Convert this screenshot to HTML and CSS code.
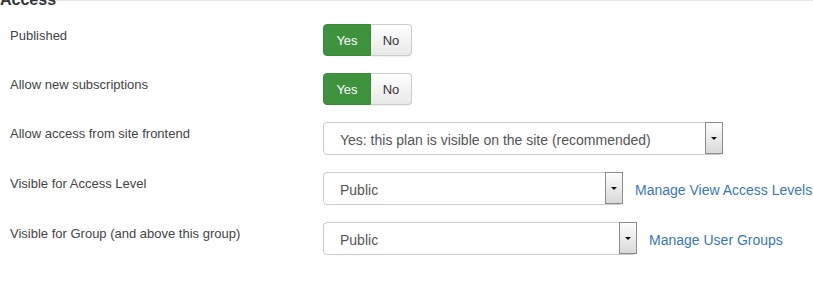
FILE: index.html
```html
<!DOCTYPE html>
<html><head><meta charset="utf-8"><title>Access</title>
<link rel="stylesheet" href="styles.css">
</head><body>
<div class="legend">
   <span class="legend-text">Access</span>
   <span class="legend-rule"></span>
</div>
<div class="form">
   <div class="row">
      <div class="label">Published</div>
      <div class="controls">
         <div class="toggle"><span class="btn yes">Yes</span><span class="btn no">No</span></div>
      </div>
   </div>
   <div class="row">
      <div class="label">Allow new subscriptions</div>
      <div class="controls">
         <div class="toggle"><span class="btn yes">Yes</span><span class="btn no">No</span></div>
      </div>
   </div>
   <div class="row">
      <div class="label">Allow access from site frontend</div>
      <div class="controls">
         <div class="select wide"><span class="value">Yes: this plan is visible on the site (recommended)</span><span class="caret"></span></div>
      </div>
   </div>
   <div class="row">
      <div class="label">Visible for Access Level</div>
      <div class="controls">
         <div class="select mid"><span class="value">Public</span><span class="caret"></span></div>
         <a class="link" href="#">Manage View Access Levels</a>
      </div>
   </div>
   <div class="row">
      <div class="label">Visible for Group (and above this group)</div>
      <div class="controls">
         <div class="select group"><span class="value">Public</span><span class="caret"></span></div>
         <a class="link" href="#">Manage User Groups</a>
      </div>
   </div>
</div>
</body></html>
```

FILE: styles.css
```css
body
{
	margin      : 0;
	color       : #444;
	background  : #fff;
	font-family : "Liberation Sans", Arial, sans-serif;
	font-size   : 13px;
	overflow    : hidden;
}
.legend
{
	display     : flex;
	align-items : flex-start;
	height      : 6px;
}
.legend-text
{
	margin-top  : -10px;
	line-height : 20px;
	font-size   : 16px;
	font-weight : bold;
	color       : #333;
	white-space : nowrap;
}
.legend-rule { flex : 1; border-top : 1px solid #e5e5e5; }
.form { padding : 18px 0 0 10px; }
.row { display : flex; margin-bottom : 17px; }
.label
{
	width       : 313px;
	flex        : none;
	padding-top : 3px;
	line-height : 18px;
}
.controls { display : flex; align-items : center; gap : 12px; }
.toggle { display : flex; height : 32px; }
.btn
{
	display         : flex;
	align-items     : center;
	justify-content : center;
	box-sizing      : border-box;
	font-size       : 13px;
	padding-top     : 1px;
}
.btn.yes
{
	width            : 48px;
	color            : #fff;
	background-color : #3e923e;
	border           : 1px solid #388a38;
	border-radius    : 4px 0 0 4px;
}
.btn.no
{
	width         : 41px;
	color         : #333;
	background    : linear-gradient(#fff, #e8e8e8);
	border        : 1px solid #ccc;
	border-left   : none;
	border-radius : 0 4px 4px 0;
	box-shadow    : 0 1px 1px rgba(0,0,0,.06);
}
.select
{
	display       : flex;
	box-sizing    : border-box;
	height        : 33px;
	border        : 1px solid #ccc;
	border-radius : 4px;
	background    : #fff;
	font-size     : 14px;
	color         : #555;
}
.select.wide  { width : 400px; }
.select.mid   { width : 300px; }
.select.group { width : 314px; }
.value
{
	flex         : 1;
	align-self   : center;
	padding      : 3px 0 0 16px;
	line-height  : 16px;
	white-space  : nowrap;
}
.caret
{
	position   : relative;
	width      : 16px;
	margin     : -1px -1px 0 0;
	border     : 1px solid #8c8c8c;
	background : linear-gradient(#fdfdfd, #d9d9d9);
}
.caret::after
{
	content      : "";
	position     : absolute;
	left         : 5px;
	top          : 14px;
	border-left  : 3px solid transparent;
	border-right : 3px solid transparent;
	border-top   : 3px solid #111;
}
.link
{
	font-size       : 14px;
	color           : #3a77b8;
	text-decoration : none;
	white-space     : nowrap;
	padding-top     : 2px;
}
```
